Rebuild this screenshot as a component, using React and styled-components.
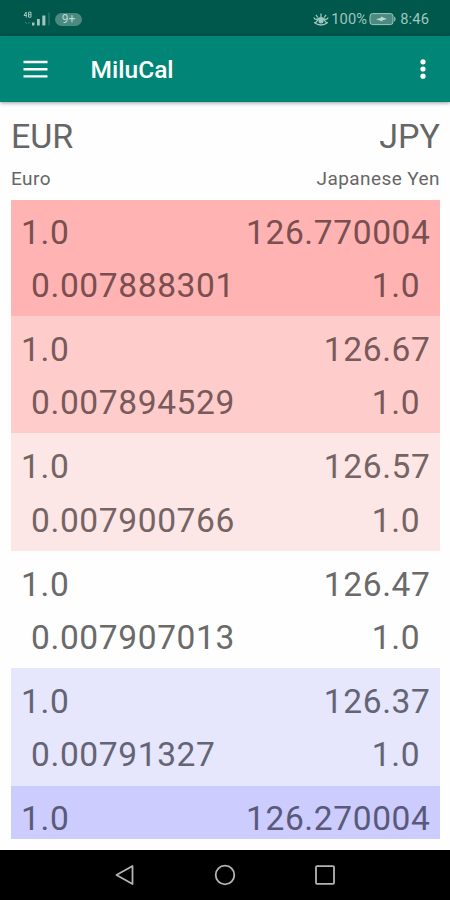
import styled, {createGlobalStyle} from "styled-components";

const colors = {
    status: '#00574b',
    bar: '#018577',
    text: '#666666',
    icon: '#9fc6bf',
};

const rates = [
    {left: '1.0', right: '126.770004', inverse: '0.007888301', color: '#ffb3b3', text: '#794f4f'},
    {left: '1.0', right: '126.67', inverse: '0.007894529', color: '#ffcccc', text: '#785a5a'},
    {left: '1.0', right: '126.57', inverse: '0.007900766', color: '#fde6e6', text: '#746464'},
    {left: '1.0', right: '126.47', inverse: '0.007907013', color: '#fefefe', text: '#6a6a6a'},
    {left: '1.0', right: '126.37', inverse: '0.00791327', color: '#e6e6fd', text: '#646474'},
    {left: '1.0', right: '126.270004', color: '#ccccff', text: '#5a5a78'},
];

const StatusBar = () => {
    return (<StyledStatus>
            <StatusGroup>
                <svg width="28" height="18" viewBox="0 0 28 18">
                    <g fill="none" stroke={colors.icon} strokeWidth="1">
                        <path d="M3.2 7.5V2L1 5.5H4M5.5 2.2H8V7.2H5.5ZM5.5 4.7H8"/>
                        <path d="M2 12L4 14M6 12V14" opacity="0.35"/>
                    </g>
                    <path d="M9 12.5h2.5v3H9zM14 9h2.8v6.5H14zM19.3 5.5H22.4v10h-3.1z" fill={colors.icon}/>
                    <path d="M26 2.5V15.5" stroke={colors.icon} opacity="0.4"/>
                </svg>
                <Badge>9+</Badge>
            </StatusGroup>
            <StatusGroup>
                <svg width="16" height="14" viewBox="0 0 16 14">
                    <g fill="none" stroke={colors.icon} strokeWidth="1.3">
                        <path d="M.8 5.5Q2 8 4 7.3Q8 4 12 7.3Q14 8 15.2 5.5"/>
                        <path d="M1.2 10.5Q3 11 4 9Q8 3.5 12 9Q13 11 14.8 10.5Q8 15.5 1.2 10.5Z"/>
                        <path d="M8 5V1.5M4.7 5.5L3 2.8M11.3 5.5L13 2.8"/>
                    </g>
                    <circle cx="8" cy="9" r="2.5" fill={colors.icon}/>
                </svg>
                <StatusText $width={36}>100%</StatusText>
                <svg width="27" height="14" viewBox="0 0 27 14">
                    <rect x="1" y="1.6" width="23" height="11" rx="2.5" fill="#4b8a80" stroke={colors.icon}/>
                    <path d="M25.2 4.5Q26.5 4.5 26.5 7T25.2 9.5Z" fill={colors.icon}/>
                    <path d="M7 7.2L12 5.8V4.5L18 6.9L13.5 8.3V9.5Z" fill="#b9d6d1"/>
                </svg>
                <StatusText $gap={2}>8:46</StatusText>
            </StatusGroup>
        </StyledStatus>);
}

const Toolbar = () => {
    return (<StyledToolbar>
            <svg width="26" height="18" viewBox="0 0 26 18">
                <path d="M.5 2H24.5M.5 9.3H24.5M.5 16.4H24.5" stroke="#fff" strokeWidth="2.4"/>
            </svg>
            <Title>MiluCal</Title>
            <svg width="6" height="22" viewBox="0 0 6 22" fill="#fff">
                <circle cx="3" cy="3.8" r="2.6"/>
                <circle cx="3" cy="11" r="2.6"/>
                <circle cx="3" cy="18.2" r="2.6"/>
            </svg>
        </StyledToolbar>);
}

const NavBar = () => {
    return (<StyledNav>
            <svg width="20" height="22" viewBox="0 0 20 22">
                <path d="M1.5 11L17.5 2V20Z"/>
            </svg>
            <svg width="22" height="22" viewBox="0 0 22 22">
                <circle cx="11" cy="11" r="9.3"/>
            </svg>
            <svg width="20" height="22" viewBox="0 0 20 22">
                <rect x="1" y="2.2" width="18" height="17.6" rx="1"/>
            </svg>
        </StyledNav>);
}

const App = () => {
    return (<>
            <GlobalStyle/>
            <Screen>
                <StatusBar/>
                <Toolbar/>
                <Content>
                    <Codes><span>EUR</span><span>JPY</span></Codes>
                    <Names><span>Euro</span><span>Japanese Yen</span></Names>
                    <RateList>
                        {rates.map((rate) => (
                            <Rate key={rate.right} $color={rate.color} $text={rate.text}>
                                <RateLine><span>{rate.left}</span><span>{rate.right}</span></RateLine>
                                {rate.inverse && (
                                    <RateLine $inset><span>{rate.inverse}</span><span>1.0</span></RateLine>
                                )}
                            </Rate>
                        ))}
                    </RateList>
                </Content>
                <NavBar/>
            </Screen>
        </>);
}

export default App;

const GlobalStyle = createGlobalStyle`
  body {
    margin: 0;
    background: #fff;
  }

  svg {
    display: block;
    flex-shrink: 0;
  }
`;

const Screen = styled.div`
  width: 450px;
  height: 900px;
  display: flex;
  flex-direction: column;
  overflow: hidden;
  background: #fefefe;
  font-family: Roboto, "Liberation Sans", sans-serif;
`;

const StyledStatus = styled.div`
  height: 36px;
  flex-shrink: 0;
  box-sizing: border-box;
  padding: 0 21px 0 23px;
  display: flex;
  align-items: center;
  justify-content: space-between;
  background: ${colors.status};
`;

const StatusGroup = styled.div`
  display: flex;
  align-items: center;
  gap: 2px;
  padding-top: 2px;
`;

const StatusText = styled.span`
  color: ${colors.icon};
  font-size: 14.7px;
  letter-spacing: 0.1px;
  line-height: 18px;
  width: ${({$width}) => $width ? `${$width}px` : 'auto'};
  margin-left: ${({$gap}) => $gap || 0}px;
`;

const Badge = styled.span`
  width: 27px;
  height: 13px;
  margin-left: 2px;
  border-radius: 7px;
  background: #4b8a80;
  color: #b9d6d1;
  font-size: 12px;
  line-height: 13px;
  text-align: center;
`;

const StyledToolbar = styled.header`
  height: 66px;
  flex-shrink: 0;
  box-sizing: border-box;
  padding: 0 24px 0 23px;
  display: flex;
  align-items: center;
  background: ${colors.bar};
  box-shadow: 0 1px 4px rgba(0, 0, 0, 0.4);
`;

const Title = styled.h1`
  flex: 1;
  margin: 1px 0 0 41.6px;
  color: #fff;
  font-size: 24.5px;
  font-weight: 500;
  line-height: 30px;
`;

const Content = styled.main`
  flex: 1;
  min-height: 0;
  display: flex;
  flex-direction: column;
  padding: 13px 10px 10.5px 11px;
  color: ${colors.text};
`;

const Codes = styled.div`
  display: flex;
  justify-content: space-between;
  font-size: 34px;
  line-height: 42px;
`;

const Names = styled.div`
  display: flex;
  justify-content: space-between;
  padding-top: 10px;
  font-size: 19px;
  letter-spacing: 0.42px;
  line-height: 24px;
  height: 34px;
  box-sizing: border-box;
  margin-bottom: 9px;
`;

const RateList = styled.div`
  flex: 1;
  min-height: 0;
  overflow: hidden;
`;

const Rate = styled.div`
  height: 117.4px;
  box-sizing: border-box;
  padding: 13px 10px 0;
  background: ${({$color}) => $color};
  color: ${({$text}) => $text};

  &:first-child {
    height: 116px;
    padding-top: 12px;
  }

  &:last-child {
    height: 54px;
    padding-top: 12.5px;
    overflow: hidden;
  }
`;

const RateLine = styled.div`
  display: flex;
  justify-content: space-between;
  padding: ${({$inset}) => $inset ? '0 10.4px 0 10px' : '0'};
  margin-right: -0.5px;
  font-size: 33.5px;
  letter-spacing: 0.62px;
  line-height: 42px;

  & + & {
    margin-top: 11.3px;
  }
`;

const StyledNav = styled.nav`
  height: 50.5px;
  flex-shrink: 0;
  display: flex;
  align-items: center;
  justify-content: center;
  gap: 79px;
  background: #000;

  svg {
    fill: none;
    stroke: #b4b4b4;
    stroke-width: 1.8;
    stroke-linejoin: round;
  }
`;
